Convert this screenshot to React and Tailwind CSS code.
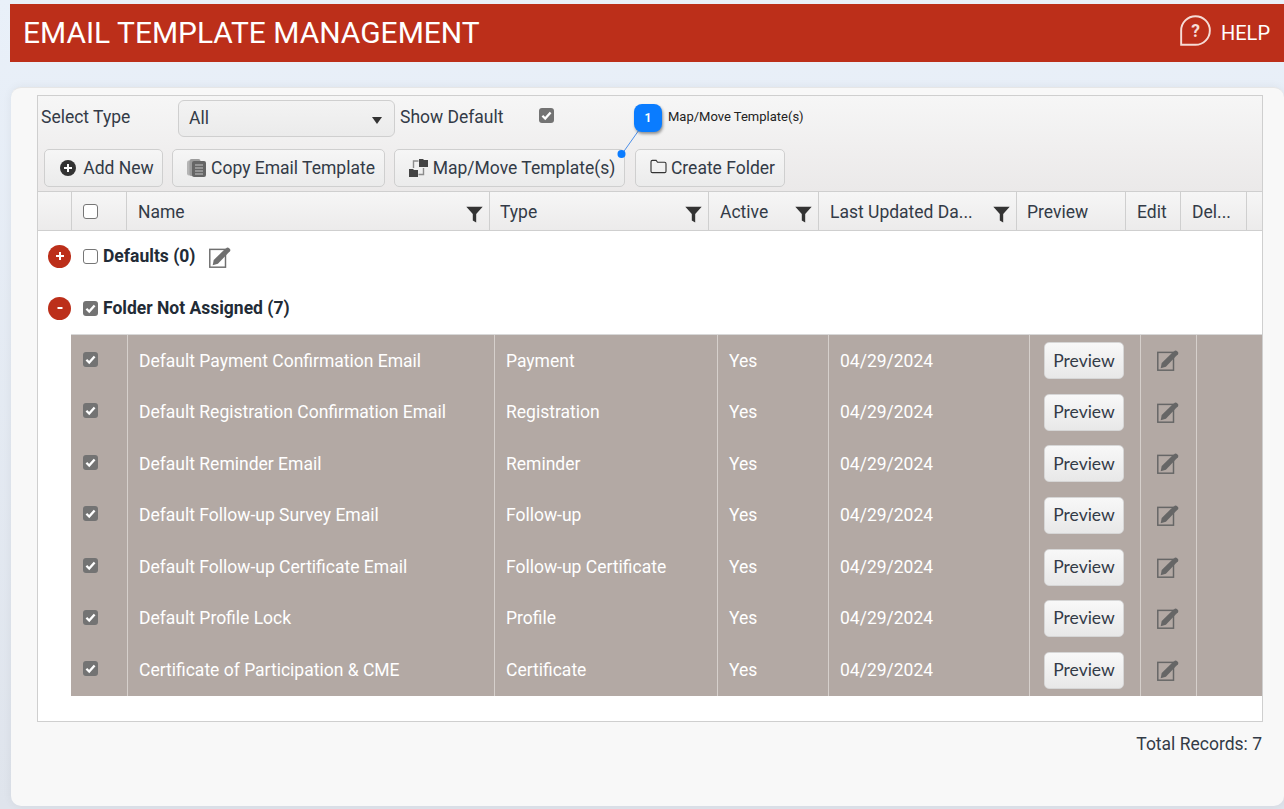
import React from "react";

function Check({ checked, className = "" }) {
  return (
    <span className={`inline-flex w-[15px] h-[15px] shrink-0 rounded-[3px] items-center justify-center ${checked ? "bg-[#737373]" : "bg-white border border-[#767676]"} ${className}`}>
      {checked && (
        <svg viewBox="0 0 15 15" className="w-[15px] h-[15px]">
          <path d="M3.4 7.8 L6.2 10.6 L11.6 4.4" fill="none" stroke="#fff" strokeWidth="2.3" />
        </svg>
      )}
    </span>
  );
}

function EditIcon({ color = "#6f6f6f", className = "" }) {
  return (
    <svg viewBox="0 0 21 20" className={`w-[22px] h-[21px] ${className}`}>
      <rect x="0.75" y="2.25" width="15" height="17" fill="none" stroke={color} strokeWidth="1.4" />
      <path d="M3.5 17.5 L4.5 12.5 L14.5 2.5 L17 0.8 Q18 0.2 19 1 L20 2 Q20.8 3 20 4 L18.3 5.8 L8.5 16 Z" fill={color} />
    </svg>
  );
}

function Funnel() {
  return (
    <svg viewBox="0 0 17 17" className="w-[17px] h-[17px] absolute right-[6px] top-[14px]">
      <path d="M0.3 0.8 H16.7 L10.2 8 V16.5 L6.8 14.5 V8 Z" fill="#333" />
    </svg>
  );
}

function Btn({ className = "", children }) {
  return (
    <button className={`h-[38px] pl-[5px] flex items-center justify-center rounded-[5px] border border-[#cfcfcf] bg-gradient-to-b from-[#f6f6f6] to-[#ebebeb] text-[#333b47] text-[17.5px] ${className}`}>
      {children}
    </button>
  );
}

const headers = [
  { w: "w-[34px]", t: "", p: "pl-[11px]" },
  { w: "w-[55px]", t: "check", p: "pl-[11px]" },
  { w: "w-[363px]", t: "Name", f: true, p: "pl-[11px]" },
  { w: "w-[219px]", t: "Type", f: true, p: "pl-[10px]" },
  { w: "w-[110px]", t: "Active", f: true, p: "pl-[11px]" },
  { w: "w-[198px]", t: "Last Updated Da...", f: true, p: "pl-[11px]" },
  { w: "w-[109px]", t: "Preview", p: "pl-[10px]" },
  { w: "w-[55px]", t: "Edit", p: "pl-[11px]" },
  { w: "w-[66px]", t: "Del...", p: "pl-[11px]" },
];

const rows = [
  ["Default Payment Confirmation Email", "Payment"],
  ["Default Registration Confirmation Email", "Registration"],
  ["Default Reminder Email", "Reminder"],
  ["Default Follow-up Survey Email", "Follow-up"],
  ["Default Follow-up Certificate Email", "Follow-up Certificate"],
  ["Default Profile Lock", "Profile"],
  ["Certificate of Participation & CME", "Certificate"],
];

function Cell({ w, children, className = "" }) {
  return <div className={`${w} h-full shrink-0 flex items-center border-r border-[#d6d0cc] ${className}`}>{children}</div>;
}

export default function App() {
  return (
    <div className="w-[1284px] h-[809px] overflow-hidden bg-gradient-to-b from-[#e9f0f9] to-[#dfe4ec] font-['Roboto',sans-serif] pt-[4px] pl-[10px] text-[17.5px]">
      <div className="h-[58px] bg-[#bc2f1a] flex items-center justify-between pl-[13px] pr-[14px] text-white">
        <span className="text-[29.95px] leading-none">EMAIL TEMPLATE MANAGEMENT</span>
        <div className="flex items-center gap-[10px]">
          <svg viewBox="0 0 32 32" className="w-[31px] h-[31px] mb-[5px]">
            <path d="M1.2 30.8 V16 A14.8 14.8 0 1 1 16 30.8 Z" fill="none" stroke="#f6dcd6" strokeWidth="2" />
            <text x="16" y="22.5" textAnchor="middle" fontSize="18" fontWeight="700" fill="#f6dcd6" fontFamily="Roboto, sans-serif">?</text>
          </svg>
          <span className="text-[20px]">HELP</span>
        </div>
      </div>

      <div className="mt-[25px] ml-[1px] h-[719px] rounded-[10px] bg-[#f8f8f8] pt-[7px] pl-[26px] pr-[21px] border-t border-[#e6e6e6] shadow-[0_0_10px_rgba(0,0,0,0.06)]">
        <div className="relative w-[1226px] h-[627px] border border-[#cfcfcf] bg-white">
          {/* toolbar */}
          <div className="h-[96px] bg-gradient-to-b from-[#f6f6f6] to-[#ebe9e9] border-b border-[#cfcfcf]">
            <div className="flex items-center h-[37px] pt-[4px] box-content">
              <span className="w-[140px] pl-[3px] text-[#333b47] mb-[2px]">Select Type</span>
              <div className="w-[217px] h-[37px] rounded-[6px] border border-[#cfcfcf] bg-gradient-to-b from-[#f3f3f3] to-[#ebebeb] flex items-center justify-between pl-[10px] pr-[12px] text-[#333b47]">
                <span>All</span>
                <span className="w-0 h-0 mt-[4px] border-l-[5px] border-r-[5px] border-t-[7px] border-l-transparent border-r-transparent border-t-[#333]" />
              </div>
              <span className="ml-[5px] w-[139px] text-[#333b47] mb-[2px]">Show Default</span>
              <Check checked className="mb-[6px]" />
            </div>
            <div className="flex mt-[12px] pl-[6px] gap-[9px]">
              <Btn className="w-[119px] gap-[7px]">
                <svg viewBox="0 0 16 16" className="w-[16px] h-[16px] ml-[2px]">
                  <circle cx="8" cy="8" r="8" fill="#333" />
                  <path d="M8 4 V12 M4 8 H12" stroke="#fff" strokeWidth="2" />
                </svg>
                Add New
              </Btn>
              <Btn className="w-[213px] gap-[5px]">
                <svg viewBox="0 0 19 18" className="w-[19px] h-[18px]">
                  <rect x="0" y="1.5" width="10" height="15" rx="2" fill="#b5b5b5" />
                  <rect x="2.5" y="0" width="11" height="17" rx="2" fill="#9c9c9c" />
                  <rect x="5" y="2" width="14" height="16" rx="2" fill="#666" />
                  <path d="M8 6 H16 M8 9 H16 M8 12 H16 M8 15 H16" stroke="#c4c4c4" strokeWidth="1" />
                </svg>
                Copy Email Template
              </Btn>
              <Btn className="w-[231px] gap-[5px]">
                <svg viewBox="0 0 19 18" className="w-[19px] h-[18px]">
                  <path d="M0 10 H4 L5 11 H9 V18 H0 Z" fill="#444" />
                  <path d="M10 0 H14 L15 1 H19 V8 H10 Z" fill="#444" />
                  <path d="M4.5 9 V2 H9.5 M14.5 9 V15.5 H9.5" fill="none" stroke="#8c8c8c" strokeWidth="1.4" />
                </svg>
                Map/Move Template(s)
              </Btn>
              <Btn className="w-[150px] ml-[1px] gap-[4px]">
                <svg viewBox="0 0 18 16" className="w-[17px] h-[15px] mb-[3px]">
                  <path d="M1 3 Q1 1.5 2.5 1.5 H6.5 L8 3.5 H15.5 Q17 3.5 17 5 V13 Q17 14.5 15.5 14.5 H2.5 Q1 14.5 1 13 Z" fill="none" stroke="#333" strokeWidth="1.2" />
                </svg>
                Create Folder
              </Btn>
            </div>
          </div>

          {/* callout */}
          <svg viewBox="0 0 30 40" className="absolute left-[575px] top-[28px] w-[30px] h-[40px] overflow-visible">
            <path d="M26 6 L9 30" stroke="#4d8fe8" strokeWidth="1" />
            <circle cx="8.5" cy="30" r="4" fill="#0a7cff" />
          </svg>
          <div className="absolute left-[596px] top-[8px] w-[28px] h-[28px] rounded-[8px] bg-[#0a7cff] shadow-[1px_2px_3px_rgba(0,0,0,0.4)] flex items-center justify-center text-white text-[12px] font-bold">1</div>
          <span className="absolute left-[630px] top-[14px] text-[13px] leading-[14px] text-[#222]">Map/Move Template(s)</span>

          {/* header */}
          <div className="flex h-[39px] bg-gradient-to-b from-[#f6f6f6] to-[#ecebeb] border-b border-[#cfcfcf] text-[#333b47]">
            {headers.map((h, i) => (
              <div key={i} className={`${h.w} ${h.p} relative shrink-0 h-full flex items-center border-r border-[#cfcfcf]`}>
                {h.t === "check" ? <Check /> : <span className="whitespace-nowrap pt-[2px]">{h.t}</span>}
                {h.f && <Funnel />}
              </div>
            ))}
          </div>

          {/* groups */}
          <div className="h-[50px] flex items-center pl-[10px]">
            <span className="w-[23px] h-[23px] rounded-full bg-[#bc2f1a] text-white flex items-center justify-center">
              <svg viewBox="0 0 10 10" className="w-[10px] h-[10px]"><path d="M5 1 V9 M1 5 H9" stroke="#fff" strokeWidth="2" /></svg>
            </span>
            <Check className="ml-[12px]" />
            <span className="ml-[5px] font-bold text-[#222b36]">Defaults (0)</span>
            <EditIcon className="ml-[14px] mt-[2px]" />
          </div>
          <div className="h-[53px] flex items-center pl-[10px] pt-[1px]">
            <span className="w-[23px] h-[23px] rounded-full bg-[#bc2f1a] text-white flex items-center justify-center">
              <svg viewBox="0 0 10 10" className="w-[10px] h-[10px]"><path d="M2.5 5 H7.5" stroke="#fff" strokeWidth="2" /></svg>
            </span>
            <Check checked className="ml-[12px]" />
            <span className="ml-[5px] font-bold text-[#222b36]">Folder Not Assigned (7)</span>
          </div>

          {/* rows */}
          <div className="ml-[33px] bg-[#b3a9a4] text-white border-t border-t-[#d8d8d8]">
            {rows.map((r) => (
              <div key={r[0]} className="flex h-[51.57px]">
                <Cell w="w-[57px]" className="pl-[12px]"><Check checked className="mb-[3px]" /></Cell>
                <Cell w="w-[367px]" className="pl-[11px]">{r[0]}</Cell>
                <Cell w="w-[223px]" className="pl-[11px]">{r[1]}</Cell>
                <Cell w="w-[111px]" className="pl-[11px]">Yes</Cell>
                <Cell w="w-[201px]" className="pl-[11px]">04/29/2024</Cell>
                <Cell w="w-[111px]" className="pl-[14px]">
                  <button className="w-[80px] h-[37px] rounded-[5px] border border-[#d6d6d6] bg-gradient-to-b from-[#f8f8f8] to-[#e8e8e8] text-[#333b47] font-['Lato',sans-serif] text-[17.5px]">Preview</button>
                </Cell>
                <Cell w="w-[56px]" className="pl-[16px]"><EditIcon color="#666" /></Cell>
              </div>
            ))}
          </div>
        </div>
        <div className="w-[1225px] text-right text-[#333b47] mt-[9px]">Total Records: 7</div>
      </div>
    </div>
  );
}
